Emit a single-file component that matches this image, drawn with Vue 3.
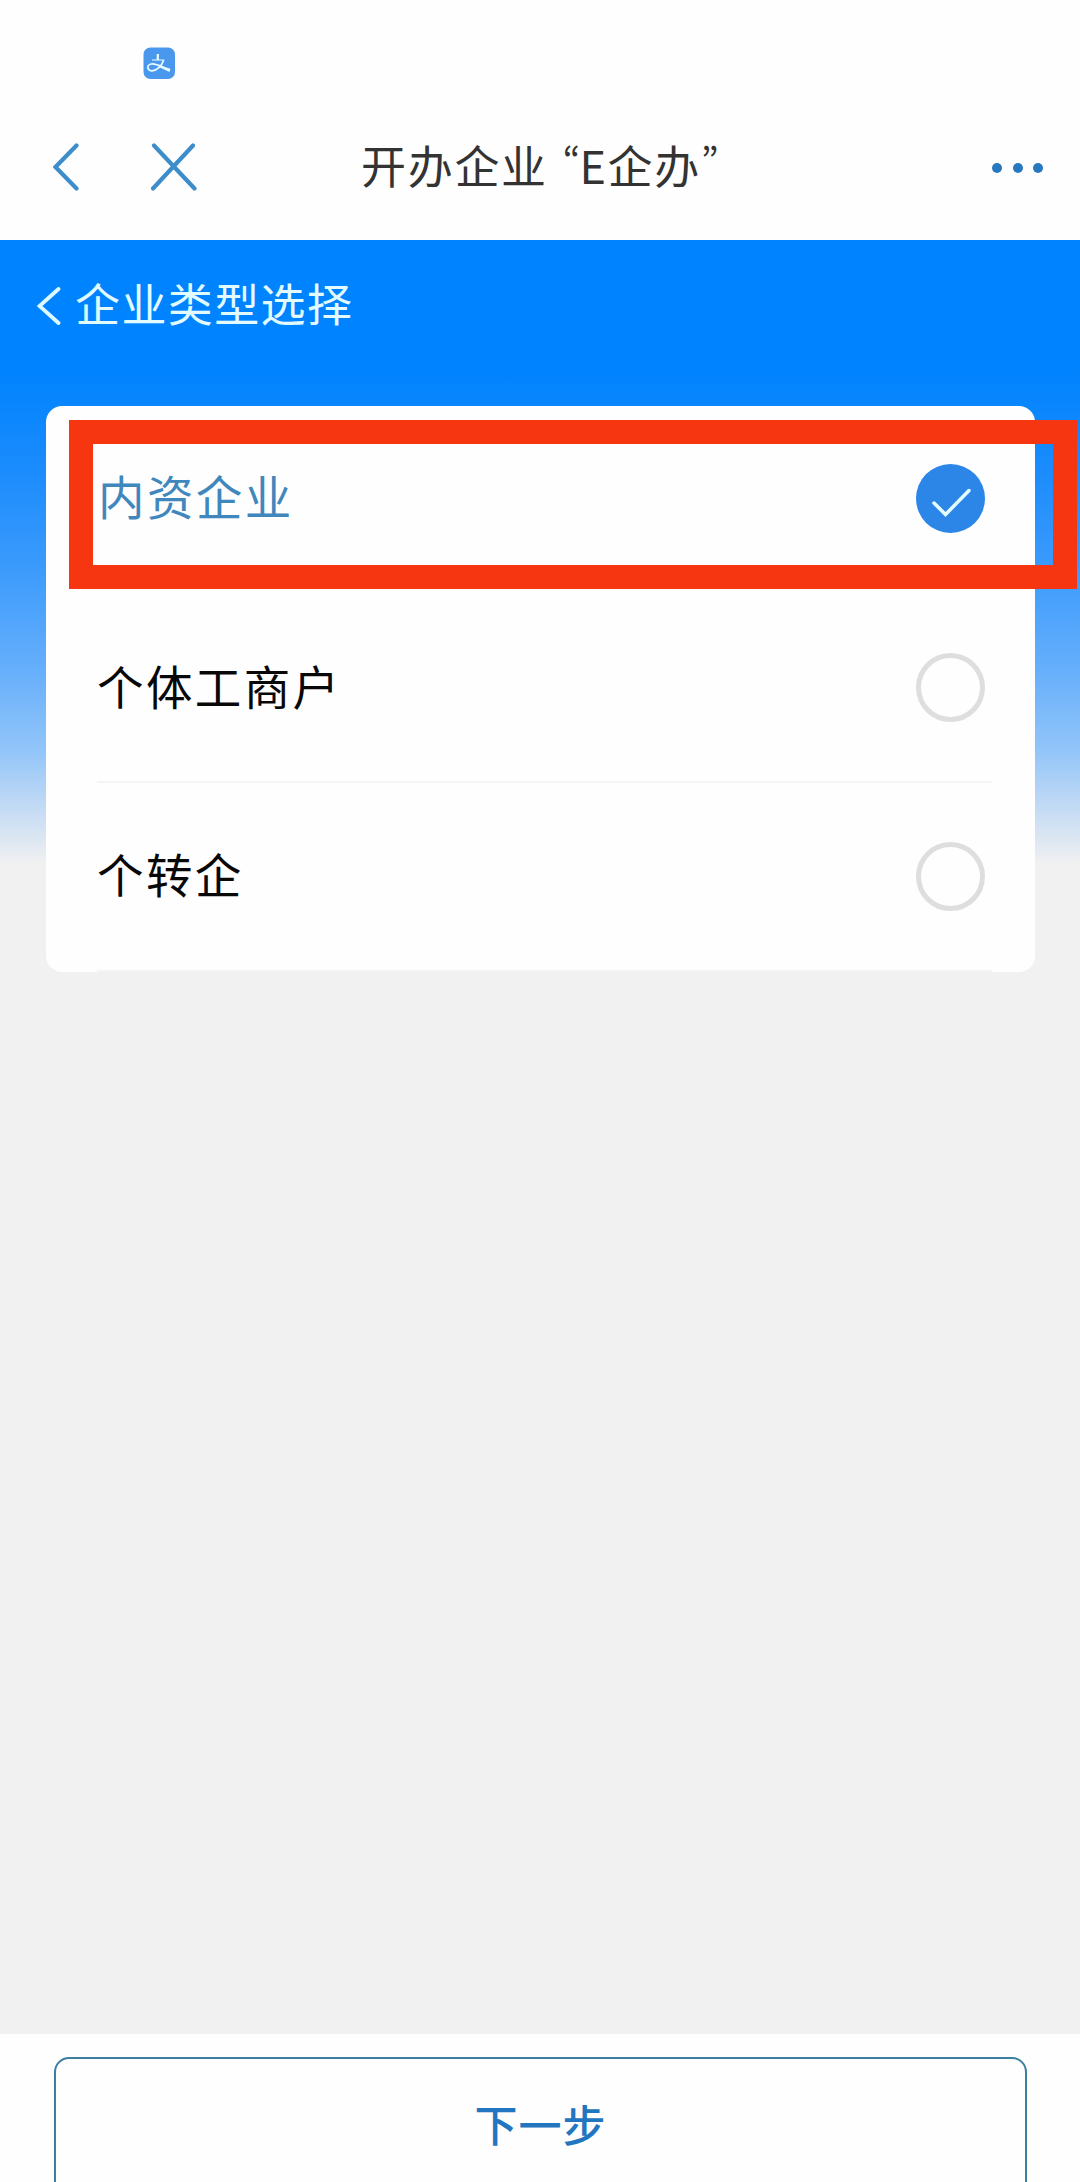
<script setup>
import { ref } from 'vue';

const selected = ref('domestic');

const companyTypes = [
  { value: 'domestic', label: '内资企业' },
  { value: 'individual', label: '个体工商户' },
  { value: 'transfer', label: '个转企' }
];

const selectType = (value) => {
  selected.value = value;
};
</script>

<template>
  <div class="page">
    <header class="app-header">
      <div class="status-bar">
        <svg class="pay-icon" viewBox="0 0 32 32">
          <rect x="0.500" y="0.500" width="31.500" height="31.500" rx="7" fill="#4a97ee" />
          <path d="M9 13H21.500" fill="none" stroke="#e8ffff" stroke-width="1" />
          <path d="M14.800 7V13" fill="none" stroke="#e8ffff" stroke-width="2.200" />
          <path
            d="M20.500 13.500C19 18.500 13.500 24.300 8.500 23.800C4 23.300 3.300 17.800 8.500 17C13 16.300 18 19.500 27 23.200"
            fill="none" stroke="#e8ffff" stroke-width="1.700"
          />
          <path d="M17 18.500L27.300 21.800L26.500 25L17 20.500Z" fill="#e8ffff" />
        </svg>
      </div>
      <div class="title-bar">
        <div class="nav-actions">
          <button class="icon-button" title="返回">
            <svg class="back-icon" viewBox="0 0 26 48">
              <path d="M23.500 2.500L2.500 24L23.500 45.500" />
            </svg>
          </button>
          <button class="icon-button" title="关闭">
            <svg class="close-icon" viewBox="0 0 46 48">
              <path d="M3 2.500L43.500 45.500M42 2.500L2 45.500" />
            </svg>
          </button>
        </div>
        <h1 class="app-title">开办企业<span class="quote">“</span>E企办<span class="quote">”</span></h1>
        <button class="icon-button more-button" title="更多">
          <span class="dot"></span>
          <span class="dot"></span>
          <span class="dot"></span>
        </button>
      </div>
    </header>

    <main class="content">
      <div class="page-heading">
        <svg class="heading-back" viewBox="0 0 24 38">
          <path d="M21.500 2L2.500 19L21.500 36" />
        </svg>
        <h2>企业类型选择</h2>
      </div>

      <div class="type-card">
        <div
          v-for="item in companyTypes"
          :key="item.value"
          class="type-row"
          :class="{ active: selected === item.value }"
          @click="selectType(item.value)"
        >
          <span class="type-label">{{ item.label }}</span>
          <span class="radio">
            <svg v-if="selected === item.value" class="check-icon" viewBox="0 0 69 69">
              <path d="M18 39L29.500 50.500L53 26.500" />
            </svg>
          </span>
        </div>
        <div class="highlight-frame"></div>
      </div>
    </main>

    <footer class="footer">
      <button class="next-button">下一步</button>
    </footer>
  </div>
</template>

<style>
body {
  margin: 0;
}
</style>

<style scoped>
.page {
  width: 1080px;
  height: 2182px;
  display: flex;
  flex-direction: column;
  overflow: hidden;
  background: #f1f1f1;
  font-family: 'Noto Sans CJK SC', 'Noto Sans', sans-serif;
}

.app-header {
  height: 240px;
  flex-shrink: 0;
  background: #fefefe;
}

.status-bar {
  height: 96px;
  box-sizing: border-box;
  padding: 47px 0 0 143px;
}

.pay-icon {
  display: block;
  width: 32px;
  height: 32px;
}

.title-bar {
  height: 144px;
  box-sizing: border-box;
  padding: 0 37px 0 53px;
  display: grid;
  grid-template-columns: 308px 1fr 51px;
  align-items: start;
}

.nav-actions {
  display: flex;
  gap: 72px;
  padding-top: 47px;
}

.icon-button {
  display: flex;
  padding: 0;
  border: none;
  background: transparent;
  cursor: pointer;
}

.back-icon,
.close-icon {
  height: 48px;
  fill: none;
  stroke: #3d8dcb;
  stroke-width: 4.2;
  stroke-linecap: round;
}

.back-icon {
  width: 26px;
}

.close-icon {
  width: 46px;
}

.app-title {
  margin: 0;
  padding-top: 35px;
  font-size: 45px;
  line-height: 68px;
  font-weight: 400;
  letter-spacing: 1.700px;
  white-space: nowrap;
  color: #333333;
}

.quote {
  font-size: 37px;
  line-height: 1;
  letter-spacing: -1px;
  vertical-align: 6px;
  font-feature-settings: 'pwid';
}

.quote:first-of-type {
  margin-left: 15px;
}

.more-button {
  justify-content: space-between;
  padding-top: 67px;
}

.dot {
  width: 10px;
  height: 10px;
  border-radius: 50%;
  background: #2878c0;
}

.content {
  flex: 1;
  padding: 0 45px 0 46px;
  background: linear-gradient(
    180deg,
    #0083fe 0,
    #0083fe 130px,
    #1b8cfd 230px,
    #3c9bfc 330px,
    #66affb 430px,
    #92c5f9 510px,
    #c5dbf4 570px,
    #f1f1f1 625px
  );
}

.page-heading {
  height: 166px;
  box-sizing: border-box;
  display: flex;
  align-items: flex-start;
  gap: 14px;
  margin-left: -9px;
  padding-top: 29px;
}

.heading-back {
  width: 24px;
  height: 38px;
  margin-top: 18px;
  fill: none;
  stroke: #dcfaff;
  stroke-width: 3.8;
  stroke-linecap: round;
}

.page-heading h2 {
  margin: 0;
  color: #e2fbff;
  font-size: 45px;
  line-height: 68px;
  font-weight: 400;
  letter-spacing: 1.400px;
}

.type-card {
  position: relative;
  height: 566px;
  box-sizing: border-box;
  padding: 0 43px 0 51px;
  border-radius: 16px;
  background: #fefefe;
}

.type-row {
  height: 188.600px;
  box-sizing: border-box;
  display: flex;
  align-items: center;
  justify-content: space-between;
  padding-right: 7px;
  border-bottom: 2px solid #f4f4f4;
  cursor: pointer;
}

.type-label {
  padding-bottom: 6px;
  color: #080808;
  font-size: 46.500px;
  line-height: 68px;
  letter-spacing: 2.400px;
}

.radio {
  width: 69px;
  height: 69px;
  box-sizing: border-box;
  display: flex;
  border: 5px solid #dedede;
  border-radius: 50%;
}

.type-row.active {
  padding-bottom: 2px;
  border-bottom-color: transparent;
}

.active .type-label {
  padding-left: 1px;
  color: #3f87bd;
}

.active .radio {
  border: none;
  background: #2b86e8;
}

.check-icon {
  width: 69px;
  height: 69px;
  fill: none;
  stroke: #e4fdff;
  stroke-width: 3.500;
  stroke-linecap: round;
}

.highlight-frame {
  position: absolute;
  top: 14px;
  left: 23px;
  width: 1008px;
  height: 169px;
  box-sizing: border-box;
  border: 24px solid #f63511;
  pointer-events: none;
}

.footer {
  height: 148px;
  flex-shrink: 0;
  box-sizing: border-box;
  padding: 23px 53px 0 54px;
  background: #fefefe;
}

.next-button {
  width: 100%;
  height: 140px;
  display: block;
  box-sizing: border-box;
  padding: 0 0 8px;
  border: 2px solid #3d7f9f;
  border-radius: 15px;
  background: #fefefe;
  color: #2275bf;
  font-family: inherit;
  font-size: 43px;
  font-weight: 500;
  letter-spacing: 1px;
  cursor: pointer;
}
</style>
